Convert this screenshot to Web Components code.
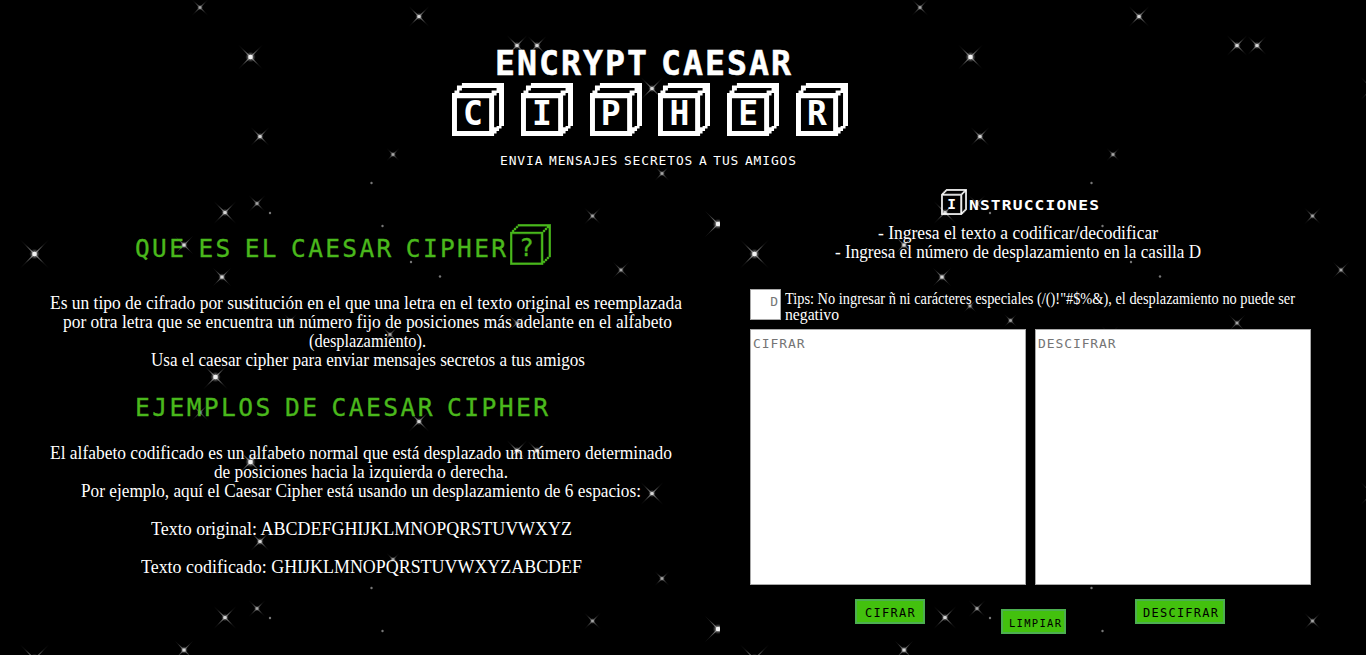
<!DOCTYPE html>
<html lang="es">
<head>
<meta charset="utf-8">
<title>Encrypt Caesar Cipher</title>
<style>
html,body{margin:0;height:100%;background:#000;overflow:hidden}
</style>
</head>
<body>
<cipher-page></cipher-page>
<script>
const PIXEL = '"DejaVu Sans Mono",monospace';

/* One line of text, condensed or widened to the width in its w attribute. */
class FitLine extends HTMLElement {
  connectedCallback() {
    this.attachShadow({mode:'open'}).innerHTML =
      `<style>:host{display:block;white-space:nowrap;flex:none}
      span{display:inline-block;transform-origin:0 50%;vertical-align:top}</style><span><slot></slot></span>`;
    const w = +this.getAttribute('w');
    this.style.width = w + 'px';
    const span = this.shadowRoot.querySelector('span');
    const ls = parseFloat(getComputedStyle(this).letterSpacing) || 0;
    const natural = span.getBoundingClientRect().width - ls;
    if (natural > 0) span.style.transform = `scaleX(${w / natural})`;
  }
}

/* A starry sky, repeated in 720 x 405 tiles. */
class StarField extends HTMLElement {
  connectedCallback() {
    const stars = [[200,7.5,8],[419,16.5,10],[250.5,57,12],[517,45.5,10],[537,45.5,9],[652,88.5,11],[260,136.5,9],
      [393,154.5,6],[662,173.5,7],[257,203.5,8],[225,212.5,11],[592.5,216,8],[718,224,13],[184,245,9],[34.5,254,14],
      [222,277,9],[621,270,8],[215.5,377,12],[390,334.5,8],[517,323,8],[290.5,320.5,6],[250,306,6]];
    const dots = [[371.5,183],[270,213],[382.5,226],[411,262],[440,276.5]];
    const star = ([x,y,r]) => {
      const c = r > 11 ? 2.8 : r > 8 ? 2 : 1.6, a = r > 11 ? .95 : r > 8 ? .85 : .65;
      return `<g transform="translate(${x} ${y})" opacity="${a}"><path d="M${-r} ${-r}L0 -1.1L${r} ${-r}L1.1 0L${r} ${r}L0 1.1L${-r} ${r}L-1.1 0Z" fill="url(#ray)"/><circle r="${c*1.9}" fill="url(#glow)"/><circle r="${c*.8}" fill="#fff"/></g>`;
    };
    this.attachShadow({mode:'open'}).innerHTML = `
    <style>:host{position:absolute;inset:0;z-index:-1}svg{display:block;width:100%;height:100%}</style>
    <svg><defs>
      <radialGradient id="ray"><stop offset="0" stop-color="#aaa"/><stop offset=".45" stop-color="#666"/><stop offset="1" stop-color="#222"/></radialGradient>
      <radialGradient id="glow"><stop offset="0" stop-color="#fff"/><stop offset="1" stop-color="#777" stop-opacity="0"/></radialGradient>
      <pattern id="sky" width="720" height="405" patternUnits="userSpaceOnUse">
        ${stars.map(star).join('')}
        ${dots.map(([x,y]) => `<circle cx="${x}" cy="${y}" r="1.2" fill="#777"/>`).join('')}
      </pattern></defs><rect width="100%" height="100%" fill="url(#sky)"/></svg>`;
  }
}

/* A stepped cube with a letter on its front face. */
class LetterCube extends HTMLElement {
  connectedCallback() {
    const size = +this.getAttribute('size'), fs = this.getAttribute('fs');
    const tall = +(this.getAttribute('tall') || size);
    const bold = this.hasAttribute('bold'), line = this.getAttribute('line') || 0;
    const art = bold
      ? `M0 4H17V21H0ZM2 6V19H15V6ZM4 0H21V17H20V18H19V19H18V20H17V17.5H18V17H19V4H18V5H17V4H16V3H18V2H4V3H3V4H1V3H2V1H4Z`
      : `M0 4H17V21H0ZM1 5V20H16V5ZM4 0H21V17H20V18H19V19H18V20H17V19H18V18H19V17H20V2H19V3H18V4H17V3H18V2H19V1H4V2H3V3H2V4H1V3H2V2H3V1H4Z`;
    this.attachShadow({mode:'open'}).innerHTML = `
    <style>:host{display:grid;flex:none;width:${size}px;height:${tall}px}
    svg,span{grid-area:1/1}svg{width:${size}px;height:${tall}px}
    span{width:${size*17/21}px;height:${tall*17/21}px;margin-top:${tall*4/21}px;line-height:${tall*17/21}px;font-size:${fs}px;text-align:center;letter-spacing:0}</style>
    <svg viewBox="${-line/2} ${-line/2} ${21+ +line} ${21+ +line}" preserveAspectRatio="none"><path fill="currentColor" stroke="currentColor" stroke-width="${line}" fill-rule="evenodd" d="${art}"/></svg><span><slot></slot></span>`;
  }
}

class GreenButton extends HTMLElement {
  connectedCallback() {
    this.attachShadow({mode:'open'}).innerHTML = `
    <style>:host{display:block;flex:none}
    button{display:block;box-sizing:border-box;width:100%;height:25px;margin:0;padding:3px 0 0 var(--pad,8px);border:2px solid #4caf50;background:#43c10e;color:#000;text-align:left;font:var(--fs,12px)/18px ${PIXEL};letter-spacing:var(--ls,1.4px)}</style>
    <button><slot></slot></button>`;
  }
}

class CipherHeader extends HTMLElement {
  connectedCallback() {
    this.attachShadow({mode:'open'}).innerHTML = `
    <style>:host{display:block;height:189px;box-sizing:border-box;padding-top:51px;font-family:${PIXEL};color:#fff}
    .t{margin-left:495px;font-size:33px;line-height:26px;font-weight:bold;letter-spacing:2px;word-spacing:-10px;-webkit-text-stroke:.5px #fff}
    .c{display:flex;margin:6px 0 0 452px;gap:16.8px;height:53px;font-weight:bold}
    .s{margin:17px 0 0 500px;font-size:13px;line-height:16px;letter-spacing:.9px;word-spacing:-3px}</style>
    <fit-line class="t" w="296">ENCRYPT CAESAR</fit-line>
    <div class="c">${[...'CIPHER'].map(l => `<letter-cube bold size="52" tall="53" fs="33">${l}</letter-cube>`).join('')}</div>
    <fit-line class="s" w="296">ENVIA MENSAJES SECRETOS A TUS AMIGOS</fit-line>`;
  }
}

class CipherInfo extends HTMLElement {
  connectedCallback() {
    this.attachShadow({mode:'open'}).innerHTML = `
    <style>:host{display:block;width:750px;padding-top:35px;box-sizing:border-box;color:#fff;font:18.5px/19px "Liberation Serif",serif}
    .h{display:flex;gap:4px;margin-left:135px;color:#4ab81c;font:24.7px/30px ${PIXEL};letter-spacing:2.4px;word-spacing:-5px;-webkit-text-stroke:.35px #4ab81c}
    .h.q fit-line{margin-top:10px}
    .p{display:flex;flex-direction:column;align-items:center;width:735px}
    .a{margin:29px 0 23px}.a :first-child{margin-right:3px}.b{margin-top:21px;width:722px}.gap{margin-top:19px}</style>
    <div class="h q"><fit-line w="371">QUE ES EL CAESAR CIPHER</fit-line><letter-cube size="41" fs="24" line=".2">?</letter-cube></div>
    <div class="p a">
      <fit-line w="632">Es un tipo de cifrado por sustitución en el que una letra en el texto original es reemplazada</fit-line>
      <fit-line w="609">por otra letra que se encuentra un número fijo de posiciones más adelante en el alfabeto</fit-line>
      <fit-line w="117">(desplazamiento).</fit-line>
      <fit-line w="434">Usa el caesar cipher para enviar mensajes secretos a tus amigos</fit-line>
    </div>
    <div class="h"><fit-line w="413">EJEMPLOS DE CAESAR CIPHER</fit-line></div>
    <div class="p b">
      <fit-line w="622">El alfabeto codificado es un alfabeto normal que está desplazado un número determinado</fit-line>
      <fit-line w="294">de posiciones hacia la izquierda o derecha.</fit-line>
      <fit-line w="560">Por ejemplo, aquí el Caesar Cipher está usando un desplazamiento de 6 espacios:</fit-line>
      <fit-line class="gap" w="421">Texto original: ABCDEFGHIJKLMNOPQRSTUVWXYZ</fit-line>
      <fit-line class="gap" w="441">Texto codificado: GHIJKLMNOPQRSTUVWXYZABCDEF</fit-line>
    </div>`;
  }
}

class CipherTool extends HTMLElement {
  connectedCallback() {
    this.attachShadow({mode:'open'}).innerHTML = `
    <style>:host{display:block;width:561px;color:#fff;font:18.5px/19px "Liberation Serif",serif}
    .h{display:flex;gap:2px;margin-left:191px;height:26px;font:bold 14px/18px ${PIXEL};letter-spacing:1px}
    .h fit-line{margin-top:7px}
    .p{display:flex;flex-direction:column;align-items:center;width:536px;margin:9px 0 27px}
    .row{display:flex}.top{height:31px}
    input,textarea{box-sizing:border-box;margin:0;border:1px solid #a9a9a9;border-radius:0;background:#fff;font:13px/16px ${PIXEL};letter-spacing:.9px;resize:none;display:block;outline:0}
    input::placeholder,textarea::placeholder{color:#757575;opacity:1}
    input{width:31px;height:31px;padding:0 1px 6px;text-align:right}
    .tips{font-size:16px;line-height:16px;margin:2px 0 0 4px}
    .areas{gap:9px;margin-top:9px}
    textarea{width:276px;height:256px;padding:6px 2px;overflow:hidden}
    .btns{margin:14px 0 0 105px;align-items:flex-start}
    .b1{width:70px;--ls:1.3px}.b2{width:65px;margin:10px 69px 0 76px;--fs:10.5px;--ls:1.3px;--pad:6px}.b3{width:90px;--pad:6px;--ls:1.25px}</style>
    <div class="h"><letter-cube size="26" fs="14.5" line=".5">I</letter-cube><fit-line w="130">NSTRUCCIONES</fit-line></div>
    <div class="p"><fit-line w="280">- Ingresa el texto a codificar/decodificar</fit-line>
    <fit-line w="366">- Ingresa el número de desplazamiento en la casilla D</fit-line></div>
    <div class="row top"><input placeholder="D"><div class="tips">
      <fit-line w="510">Tips: No ingresar ñ ni carácteres especiales (/()!"#$%&amp;), el desplazamiento no puede ser</fit-line>
      <fit-line w="54">negativo</fit-line></div></div>
    <div class="row areas"><textarea placeholder="CIFRAR"></textarea><textarea placeholder="DESCIFRAR"></textarea></div>
    <div class="row btns"><green-button class="b1">CIFRAR</green-button><green-button class="b2">LIMPIAR</green-button><green-button class="b3">DESCIFRAR</green-button></div>`;
  }
}

class CipherPage extends HTMLElement {
  connectedCallback() {
    this.attachShadow({mode:'open'}).innerHTML = `
    <style>:host{display:block;position:relative;z-index:0;width:1366px;height:655px;overflow:hidden;background:#000}
    main{display:flex}</style>
    <star-field></star-field><cipher-header></cipher-header>
    <main><cipher-info></cipher-info><cipher-tool></cipher-tool></main>`;
  }
}

customElements.define('fit-line', FitLine);
customElements.define('star-field', StarField);
customElements.define('letter-cube', LetterCube);
customElements.define('green-button', GreenButton);
customElements.define('cipher-header', CipherHeader);
customElements.define('cipher-info', CipherInfo);
customElements.define('cipher-tool', CipherTool);
customElements.define('cipher-page', CipherPage);
</script>
</body>
</html>
